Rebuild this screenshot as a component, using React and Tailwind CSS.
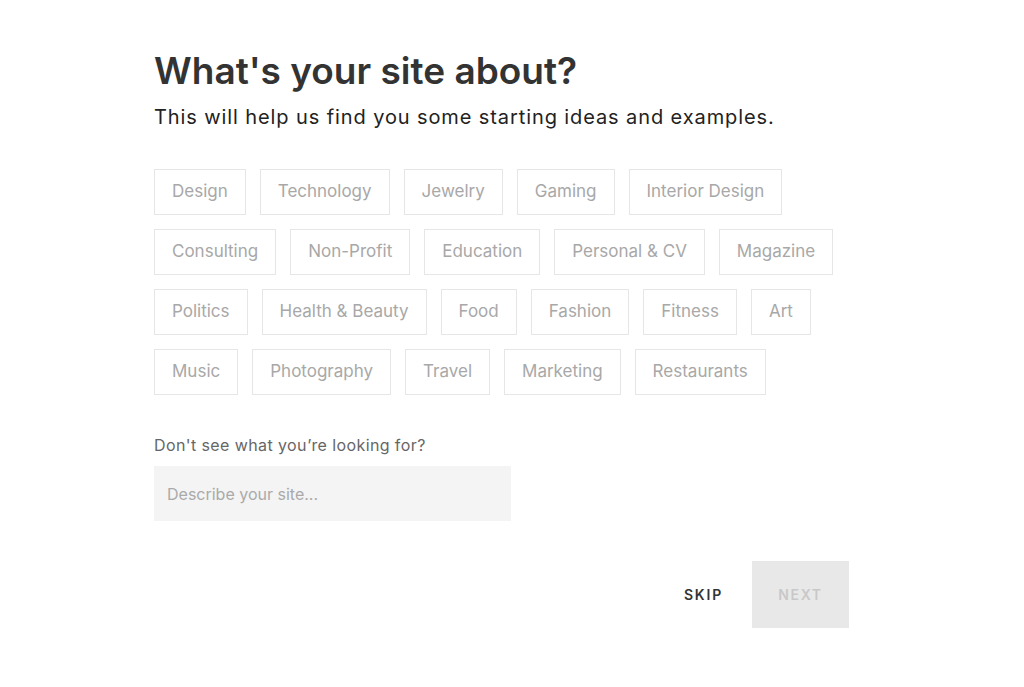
import { useState } from 'react';

const tags = [
  'Design', 'Technology', 'Jewelry', 'Gaming', 'Interior Design',
  'Consulting', 'Non-Profit', 'Education', 'Personal & CV', 'Magazine',
  'Politics', 'Health & Beauty', 'Food', 'Fashion', 'Fitness', 'Art',
  'Music', 'Photography', 'Travel', 'Marketing', 'Restaurants',
];

export default function App() {
  const [picked, setPicked] = useState([]);
  const [desc, setDesc] = useState('');

  const toggle = (t) =>
    setPicked((p) => (p.includes(t) ? p.filter((x) => x !== t) : [...p, t]));

  return (
    <div className="min-h-screen bg-white font-['Inter',sans-serif]">
      <div className="w-[716px] mx-auto pt-[49px]">
        <h1 className="text-[37px] leading-[44px] font-semibold text-[#333] tracking-[0px]">
          What's your site about?
        </h1>
        <p className="mt-[10px] text-[20px] leading-[28px] text-[#222] tracking-[0.9px]">
          This will help us find you some starting ideas and examples.
        </p>

        <div className="mt-[38px] flex flex-wrap gap-x-[14px] gap-y-[14px]">
          {tags.map((t) => (
            <button
              key={t}
              onClick={() => toggle(t)}
              className={
                'h-[46px] px-[17px] border text-[17px] ' +
                (picked.includes(t)
                  ? 'border-[#333] text-[#333]'
                  : 'border-[#e6e6e6] text-[#a8a8a8]')
              }
            >
              {t}
            </button>
          ))}
        </div>

        <label className="block mt-[40px] text-[16px] leading-[20px] text-[#666] tracking-[0.4px]">
          Don't see what you’re looking for?
        </label>
        <input
          value={desc}
          onChange={(e) => setDesc(e.target.value)}
          placeholder="Describe your site..."
          className="mt-[11px] w-[357px] h-[55px] bg-[#f4f4f4] px-[13px] text-[16px] text-[#333] placeholder-[#aaa] outline-none"
        />

        <div className="mt-[40px] flex justify-end items-center pr-[21px]">
          <button className="px-[14px] h-[67px] text-[14px] font-semibold tracking-[1.8px] text-[#333]">
            SKIP
          </button>
          <button
            disabled={!picked.length && !desc}
            className="ml-[15px] w-[97px] h-[67px] bg-[#e8e8e8] text-[14px] font-semibold tracking-[1.6px] text-[#c8c8c8]"
          >
            NEXT
          </button>
        </div>
      </div>
    </div>
  );
}
